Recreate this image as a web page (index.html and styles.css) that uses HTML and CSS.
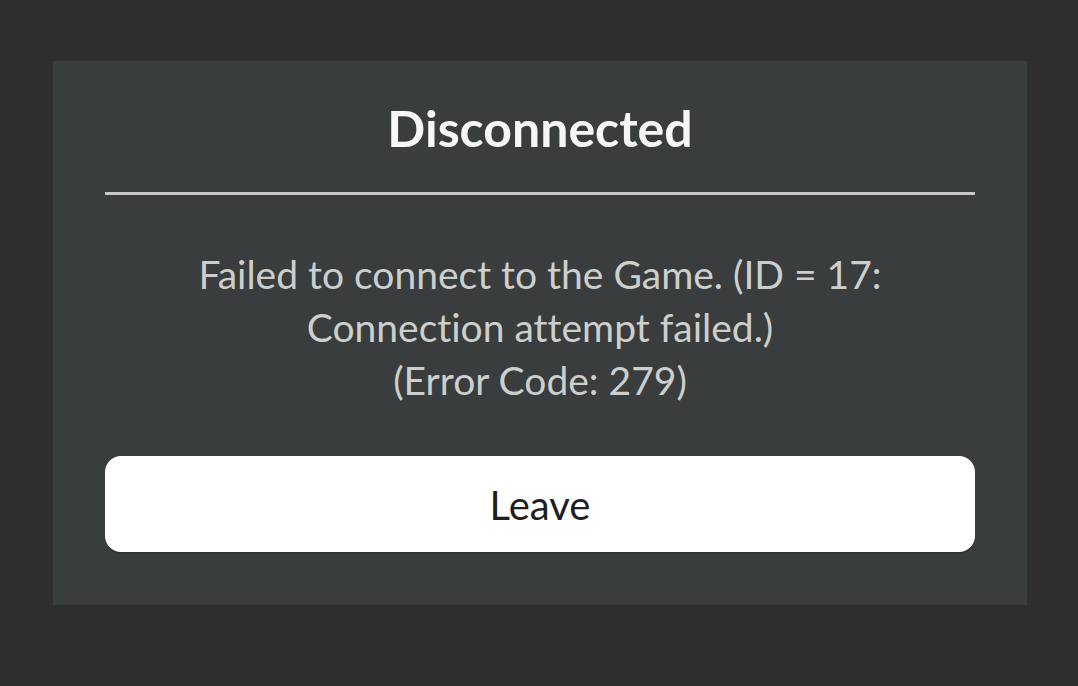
FILE: index.html
```html
<!DOCTYPE html>
<html>
<head>
<meta charset="utf-8">
<link rel="stylesheet" href="styles.css">
</head>
<body>
<div class="screen">
  <div class="dialog">
    <h1 class="title">Disconnected</h1>
    <div class="rule"></div>
    <p class="message">Failed to connect to the Game. (ID = 17:<br>Connection attempt failed.)<br>(Error Code: 279)</p>
    <button class="leave">Leave</button>
  </div>
</div>
</body>
</html>
```

FILE: styles.css
```css
html, body {
  margin: 0;
  padding: 0;
  background: #2e2e2e;
  width: 1078px;
  height: 686px;
  overflow: hidden;
  font-family: "Lato", "Open Sans", sans-serif;
  font-variant-ligatures: none;
}
.screen {
  padding: 61px 0 0 53px;
}
.dialog {
  width: 974px;
  height: 544px;
  background: #393d3d;
  box-sizing: border-box;
  padding: 0 52px;
  display: flex;
  flex-direction: column;
  align-items: stretch;
}
.title {
  margin: 40px 0 0;
  height: 54px;
  line-height: 54px;
  text-align: center;
  color: #f6f6f6;
  font-size: 50px;
  font-weight: 700;
}
.rule {
  margin-top: 37px;
  height: 3px;
  background: #c6c8c6;
}
.message {
  margin: 53px 0 0;
  text-align: center;
  color: #cdcfcd;
  font-size: 39px;
  line-height: 53px;
}
.leave {
  margin-top: 49px;
  height: 96px;
  border: none;
  border-radius: 16px;
  background: #ffffff;
  color: #1e1e1e;
  font-family: inherit;
  font-size: 40px;
  padding: 2px 0 0;
  box-shadow: 0 2px 0 #303434;
}
```
